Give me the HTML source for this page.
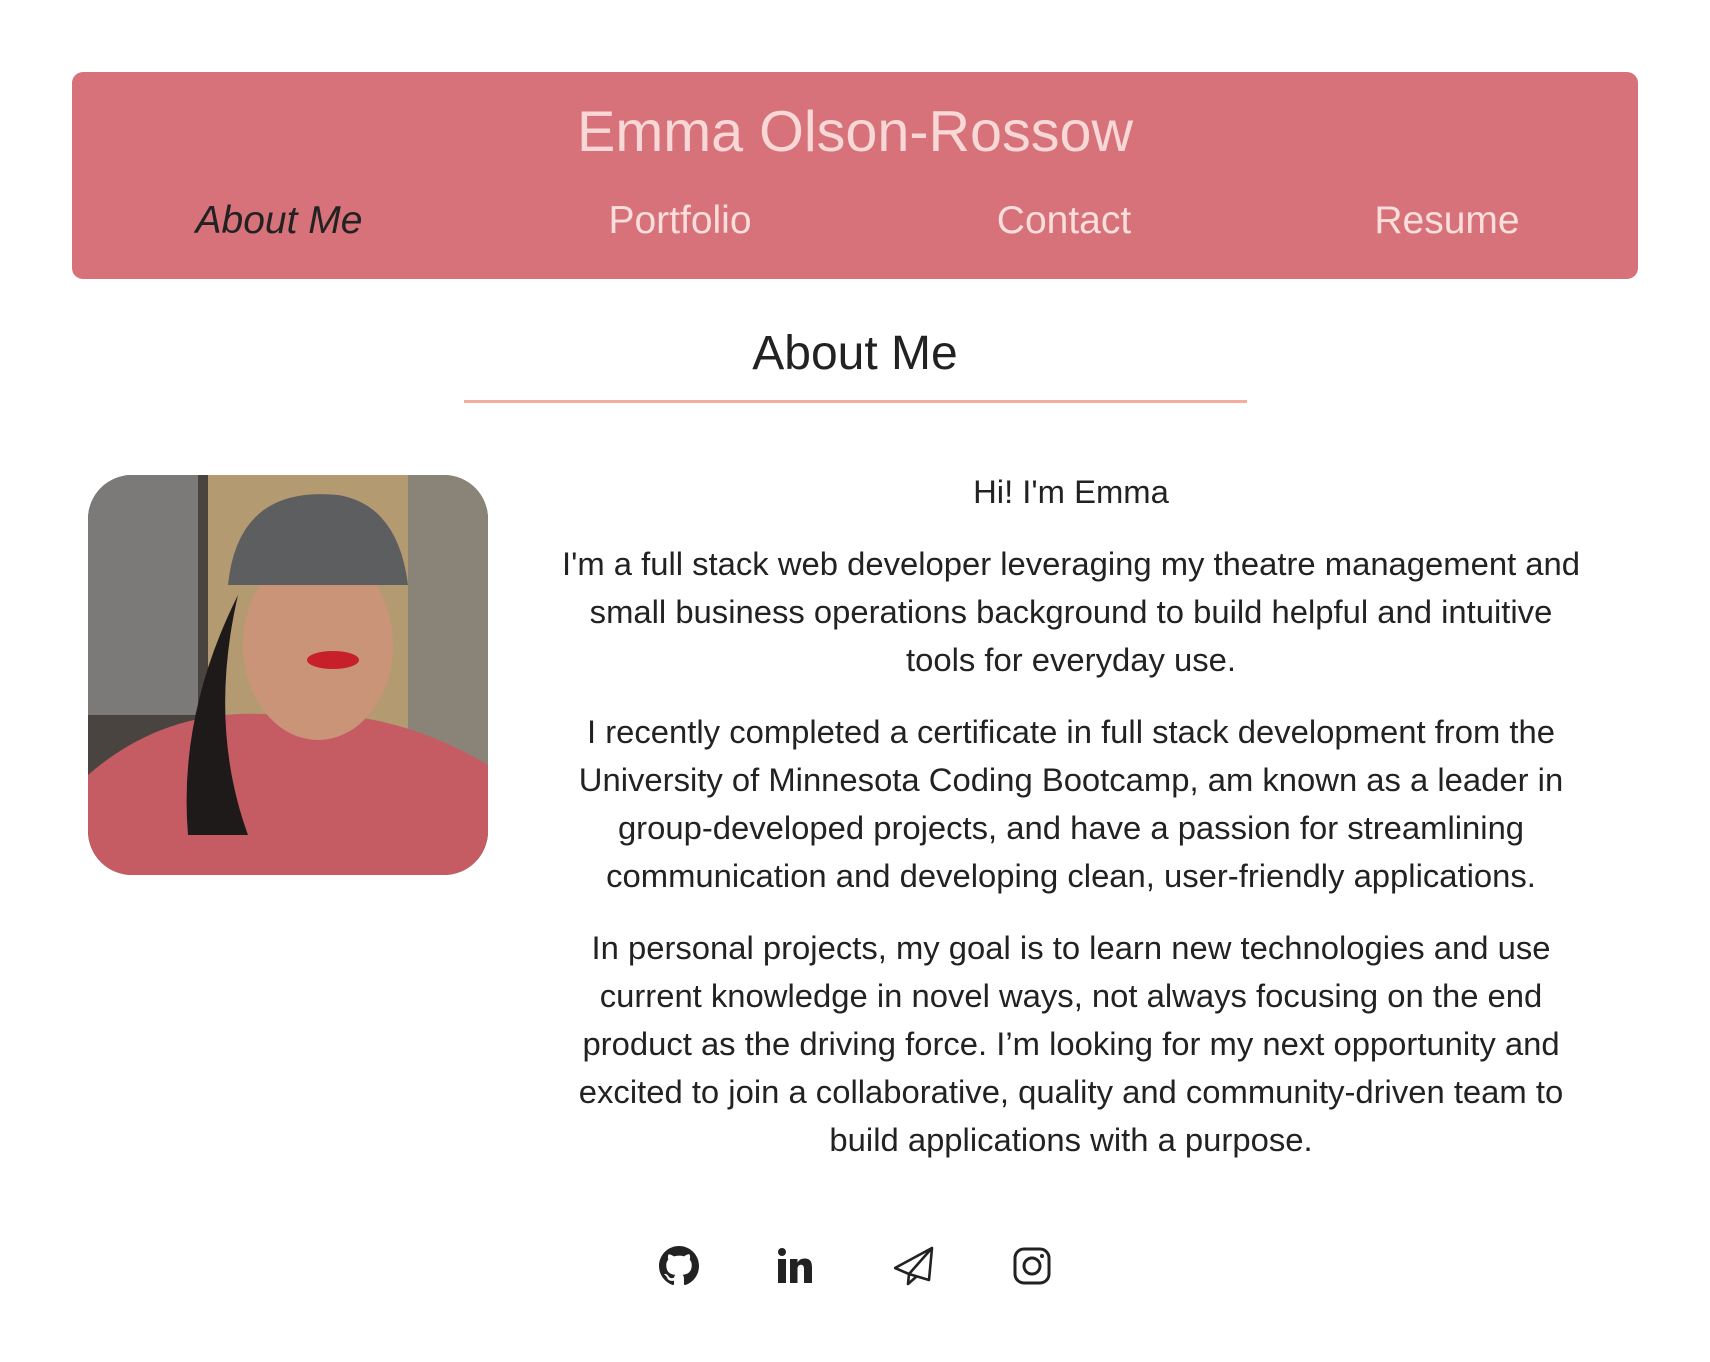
<!DOCTYPE html>
<html><head><style>
body{margin:0;width:1710px;height:1362px;background:#fff;font-family:"Liberation Sans",sans-serif;color:#212121;position:relative;overflow:hidden}
.hdr{position:absolute;left:72px;top:72px;width:1566px;height:207px;background:#d7727a;border-radius:11px}
.title{position:absolute;left:0;right:0;text-align:center;font-size:57.5px;color:#f7d8d6;line-height:64px}
.nav{position:absolute;top:198px;font-size:39px;line-height:46px;color:#f9dedc;transform:translateX(-50%);white-space:nowrap}
.h2{position:absolute;left:0;width:1710px;top:326px;text-align:center;font-size:48px;line-height:56px;color:#222}
.line{position:absolute;left:464px;width:783px;top:400px;height:3px;background:#f6ac9c}
.photo{position:absolute;left:88px;top:475px;width:400px;height:400px;border-radius:44px;overflow:hidden}
.txt{position:absolute;left:556px;width:1030px;top:468px;text-align:center;font-size:32.8px;line-height:48px;color:#222}
.txt p{margin:0 0 24px}
.ic{position:absolute;top:1246px;width:40px;height:40px}
</style></head><body>
<div class="hdr">
<div class="title" style="top:28px">Emma Olson-Rossow</div>
</div>
<div class="nav" style="left:279px;color:#222;font-style:italic">About Me</div>
<div class="nav" style="left:680px">Portfolio</div>
<div class="nav" style="left:1064px">Contact</div>
<div class="nav" style="left:1447px">Resume</div>
<div class="h2">About Me</div>
<div class="line"></div>
<div class="photo">
<svg width="400" height="400" viewBox="0 0 400 400">
<rect width="400" height="400" fill="#4a4440"/>
<rect x="120" y="0" width="200" height="260" fill="#b49a70"/>
<rect x="320" y="0" width="80" height="400" fill="#8a8378"/>
<rect x="0" y="0" width="110" height="240" fill="#7b7a78"/>
<path d="M0 400 L0 300 Q80 230 190 240 Q300 230 400 290 L400 400Z" fill="#c65c63"/>
<ellipse cx="230" cy="170" rx="75" ry="95" fill="#c99478"/>
<path d="M140 110 Q150 10 250 20 Q310 30 320 110 Z" fill="#5c5e60"/>
<path d="M150 120 Q120 250 160 360 L100 360 Q90 240 150 120Z" fill="#1e1a1a"/>
<ellipse cx="245" cy="185" rx="26" ry="9" fill="#c8202a"/>
</svg>
</div>
<div class="txt">
<p>Hi! I'm Emma</p>
<p>I'm a full stack web developer leveraging my theatre management and small business operations background to build helpful and intuitive tools for everyday use.</p>
<p>I recently completed a certificate in full stack development from the University of Minnesota Coding Bootcamp, am known as a leader in group-developed projects, and have a passion for streamlining communication and developing clean, user-friendly applications.</p>
<p>In personal projects, my goal is to learn new technologies and use current knowledge in novel ways, not always focusing on the end product as the driving force. I’m looking for my next opportunity and excited to join a collaborative, quality and community-driven team to build applications with a purpose.</p>
</div>
<svg class="ic" style="left:659px" viewBox="0 0 16 16"><path fill="#222" d="M8 0C3.58 0 0 3.58 0 8c0 3.54 2.29 6.53 5.47 7.59.4.07.55-.17.55-.38v-1.33c-2.23.48-2.7-1.07-2.7-1.07-.36-.92-.89-1.17-.89-1.17-.73-.5.05-.49.05-.49.8.06 1.23.83 1.23.83.71 1.22 1.87.87 2.33.66.07-.52.28-.87.51-1.07-1.78-.2-3.65-.89-3.65-3.95 0-.87.31-1.59.82-2.15-.08-.2-.36-1.02.08-2.12 0 0 .67-.21 2.2.82A7.6 7.6 0 0 1 8 3.86c.68 0 1.36.09 2 .27 1.53-1.04 2.2-.82 2.2-.82.44 1.1.16 1.92.08 2.12.51.56.82 1.27.82 2.15 0 3.07-1.87 3.75-3.65 3.95.29.25.54.73.54 1.48v2.2c0 .21.15.46.55.38A8 8 0 0 0 16 8c0-4.42-3.58-8-8-8z"/></svg>
<svg class="ic" style="left:776px" viewBox="0 0 40 40"><circle cx="6" cy="6" r="4" fill="#222"/><rect x="2" y="13" width="8" height="24" fill="#222"/><path fill="#222" d="M14 13h7.5v3.5c1.2-2.2 3.6-4 7-4 6 0 7.5 3.8 7.5 9V37h-8V23c0-2.5-.6-4.3-3-4.3s-3.5 1.9-3.5 4.3V37H14z"/></svg>
<svg class="ic" style="left:894px" viewBox="0 0 40 40"><path fill="none" stroke="#222" stroke-width="2.6" stroke-linejoin="round" d="M38 2 L1 22 L15 28 L38 2 L35 34 L15 28 L14 38 L22 31"/></svg>
<svg class="ic" style="left:1012px" viewBox="0 0 40 40"><rect x="3" y="3" width="34" height="34" rx="9" fill="none" stroke="#222" stroke-width="3"/><circle cx="20" cy="20" r="8" fill="none" stroke="#222" stroke-width="3"/><circle cx="30" cy="10" r="2" fill="#222"/></svg>
</body></html>
